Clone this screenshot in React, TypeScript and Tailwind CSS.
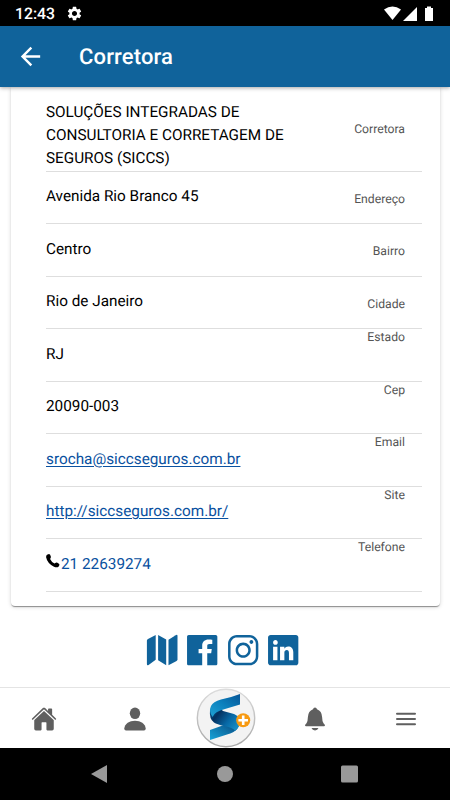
import React from "react";
import { IoLogoFacebook, IoLogoInstagram, IoLogoLinkedin } from "react-icons/io";
import { IoHome } from "react-icons/io5";
import { MdArrowBack, MdSettings } from "react-icons/md";

type Row = { label: string; value: React.ReactNode; top?: boolean };

const link = "text-[#0a51a0] underline decoration-1 underline-offset-2";

const rows: Row[] = [
  { label: "Endereço", value: "Avenida Rio Branco 45" },
  { label: "Bairro", value: "Centro" },
  { label: "Cidade", value: "Rio de Janeiro" },
  { label: "Estado", value: "RJ", top: true },
  { label: "Cep", value: "20090-003", top: true },
  { label: "Email", value: <a className={link}>srocha@siccseguros.com.br</a>, top: true },
  { label: "Site", value: <a className={link}>http://siccseguros.com.br/</a>, top: true },
  {
    label: "Telefone",
    value: (
      <span className="flex text-[#0a51a0]">
        <svg className="mt-[1.500px] mr-px size-[14px] text-black" viewBox="0 0 14 14" fill="currentColor">
          <path d="M1 .8L3 .1Q4.300 0 4.900 2.800Q5 3.900 4.100 4.900Q5.500 8 8.500 9.500L9.800 8.700Q10.700 8.300 13.200 10Q13.900 10.800 12.700 12.400Q11 14 8 12.700Q1.300 9.300 .1 3.200Q0 1.600 1 .8z" />
        </svg>
        21 22639274
      </span>
    ),
    top: true,
  },
];

function StatusBar() {
  return (
    <div className="flex h-[26px] shrink-0 items-center bg-black pl-[15px] pr-4 text-white">
      <span className="w-[51px] pt-[2px] text-[15.800px] font-medium">12:43</span>
      <MdSettings className="size-[17px]" />
      <svg className="ml-auto h-[15px] w-[50px]" viewBox="0 0 50 15" fill="currentColor">
        <path d="M0 3.400Q8.500-2.600 17 3.400L8.500 14z" />
        <path d="M33 1v14H19z" />
        <path d="M41 2h2V.5h4V2h2v13h-8z" />
      </svg>
    </div>
  );
}

function MapIcon() {
  return (
    <svg className="size-[40.400px]" viewBox="0 0 40.400 40.400" fill="currentColor">
      <path d="M4.900 10.600Q4.900 9.500 6 9L13.700 5v24.800L6.600 34.900Q4.900 35.800 4.900 34z" />
      <path d="M16.100 5L24.200 9.600V35.300L16.100 30.300z" />
      <path d="M26.500 9.800L33.700 5.200Q35.500 4.200 35.500 6V29.300Q35.500 30.300 34.600 30.900L26.500 35.300z" />
    </svg>
  );
}

function PersonIcon() {
  return (
    <svg className="h-[24px] w-[22px]" viewBox="0 0 22 24" fill="currentColor">
      <ellipse cx="11" cy="6.300" rx="5.200" ry="5.800" />
      <path d="M.3 21.500C.8 16.500 5.300 13.700 11 13.700S21.200 16.500 21.700 21.500Q21.700 23.400 20 23.400H2Q.3 23.400 .3 21.500z" />
    </svg>
  );
}

function BellIcon() {
  return (
    <svg className="h-[24px] w-[20px]" viewBox="0 0 20 24" fill="currentColor">
      <path d="M8 2.200Q8.400 .7 10 .5Q11.600 .7 12 2.200Q16.800 4 17.100 10Q17.200 14.500 18.500 16.300Q20 17.800 20 18.500Q19.800 19.300 19 19.300H1Q.2 19.300 0 18.500Q0 17.800 1.500 16.300Q2.800 14.500 2.900 10Q3.200 4 8 2.200z" />
      <path d="M6.500 21H13.500Q12.600 23.400 10 23.400T6.500 21z" />
    </svg>
  );
}

function MenuIcon() {
  return (
    <svg className="h-[14px] w-[20px]" viewBox="0 0 20 14" stroke="currentColor" strokeWidth="2" strokeLinecap="round">
      <path d="M1 1.700h18M1 7h18M1 12.300h18" />
    </svg>
  );
}

function Logo() {
  return (
    <svg className="size-[60px]" viewBox="0 0 60 60">
      <defs>
        <linearGradient id="top" x1="0" y1="1" x2="1" y2="0">
          <stop offset="0" stopColor="#20a2d4" />
          <stop offset=".5" stopColor="#0b80bd" />
          <stop offset="1" stopColor="#075596" />
        </linearGradient>
        <linearGradient id="mid" x1="0" y1="0" x2="1" y2=".7">
          <stop offset="0" stopColor="#0a6ba8" />
          <stop offset=".35" stopColor="#04305f" />
          <stop offset=".7" stopColor="#0768a5" />
          <stop offset="1" stopColor="#168bc3" />
        </linearGradient>
        <linearGradient id="low" x1="0" y1="1" x2="1" y2="0">
          <stop offset="0" stopColor="#19a5d9" />
          <stop offset="1" stopColor="#054078" />
        </linearGradient>
        <linearGradient id="rim" x1="0" y1="0" x2="0" y2="1">
          <stop offset="0" stopColor="#dcdcdc" />
          <stop offset="1" stopColor="#a8a8a8" />
        </linearGradient>
      </defs>
      <circle cx="30" cy="30" r="28.700" fill="#f3f3f3" stroke="url(#rim)" strokeWidth="1.400" />
      <path d="M14 42L28 37L41 33Q44 37 41 41Q38 44.500 31 46.500L14 52z" fill="url(#low)" />
      <path d="M14 22Q13 31 18 34.500Q21 36.300 28 38Q38 40 39 43Q45 38 44 33Q43 28 38 26L27 23L20 16z" fill="url(#mid)" />
      <path d="M44 6V16.500L29 21Q18.500 23.500 16.500 29Q12.500 23 15 18Q17 13.500 25 11.500Q35 9.500 44 6z" fill="url(#top)" />
      <circle cx="47.200" cy="32.300" r="7" fill="#f79a12" />
      <path d="M47.200 27.500v9.600M42.400 32.300h9.600" stroke="white" strokeWidth="2.600" />
    </svg>
  );
}

export default function App() {
  return (
    <div className="flex h-[800px] w-[450px] flex-col overflow-hidden bg-white font-[Roboto,sans-serif] text-black [text-rendering:geometricPrecision]">
      <StatusBar />
      <header className="z-10 flex h-[61px] shrink-0 items-center bg-[#10639b] pl-[16px] text-white shadow-[0_1px_4px_rgba(0,0,0,.35)]">
        <MdArrowBack className="size-[29px]" />
        <h1 className="ml-[34px] pt-[2px] text-[22px] font-medium tracking-[.15px]">Corretora</h1>
      </header>
      <main className="flex min-h-0 flex-1 flex-col">
        <section className="mr-[10px] ml-[11px] h-[519px] rounded-b-[4px] pr-[18px] pl-[35px] shadow-[0_2px_1px_-1px_rgba(0,0,0,.25),0_1px_1px_rgba(0,0,0,.18),0_1px_4px_rgba(0,0,0,.16)]">
          <div className="flex h-[84.500px] items-center border-b border-[#dedede] pr-[17px]">
            <p className="w-[270px] pt-[13px] text-[15.300px] leading-[23px]">
              SOLUÇÕES INTEGRADAS DE CONSULTORIA E CORRETAGEM DE SEGUROS (SICCS)
            </p>
            <span className="ml-auto text-[12.200px] text-[#555]">Corretora</span>
          </div>
          {rows.map((r) => (
            <div key={r.label} className="flex h-[52.500px] justify-between border-b border-[#dedede] pr-[17px]">
              <div className="pt-[13.500px] text-[15.300px] leading-[23px]">{r.value}</div>
              <span className={`${r.top ? "pt-0" : "pt-[19.400px]"} text-[12.200px] leading-[16.500px] text-[#555]`}>{r.label}</span>
            </div>
          ))}
        </section>
        <div className="mt-[23.600px] flex justify-center pr-[5px] text-[40.400px] text-[#10639b]">
          <MapIcon />
          <IoLogoFacebook />
          <IoLogoInstagram />
          <IoLogoLinkedin />
        </div>
      </main>
      <nav className="flex h-[61px] shrink-0 items-center border-t border-[#e4e4e4] text-[#5f5f5f]">
        <div className="flex flex-1 justify-center pt-px"><IoHome className="size-[26px]" /></div>
        <div className="flex flex-1 justify-center pt-px pl-[2px]"><PersonIcon /></div>
        <div className="flex flex-1 justify-center pl-[2px]"><Logo /></div>
        <div className="flex flex-1 justify-center pt-px"><BellIcon /></div>
        <div className="flex flex-1 justify-center pt-px pl-[2px]"><MenuIcon /></div>
      </nav>
      <div className="flex h-[52px] shrink-0 justify-center bg-black pt-[17px] text-[#999]">
        <svg className="h-[19px] w-[268px]" viewBox="0 0 268 19" fill="currentColor">
          <path d="M0 9L16 0v18z" />
          <circle cx="134" cy="9" r="8" />
          <rect x="250" y=".5" width="17" height="17" rx="1.500" />
        </svg>
      </div>
    </div>
  );
}
